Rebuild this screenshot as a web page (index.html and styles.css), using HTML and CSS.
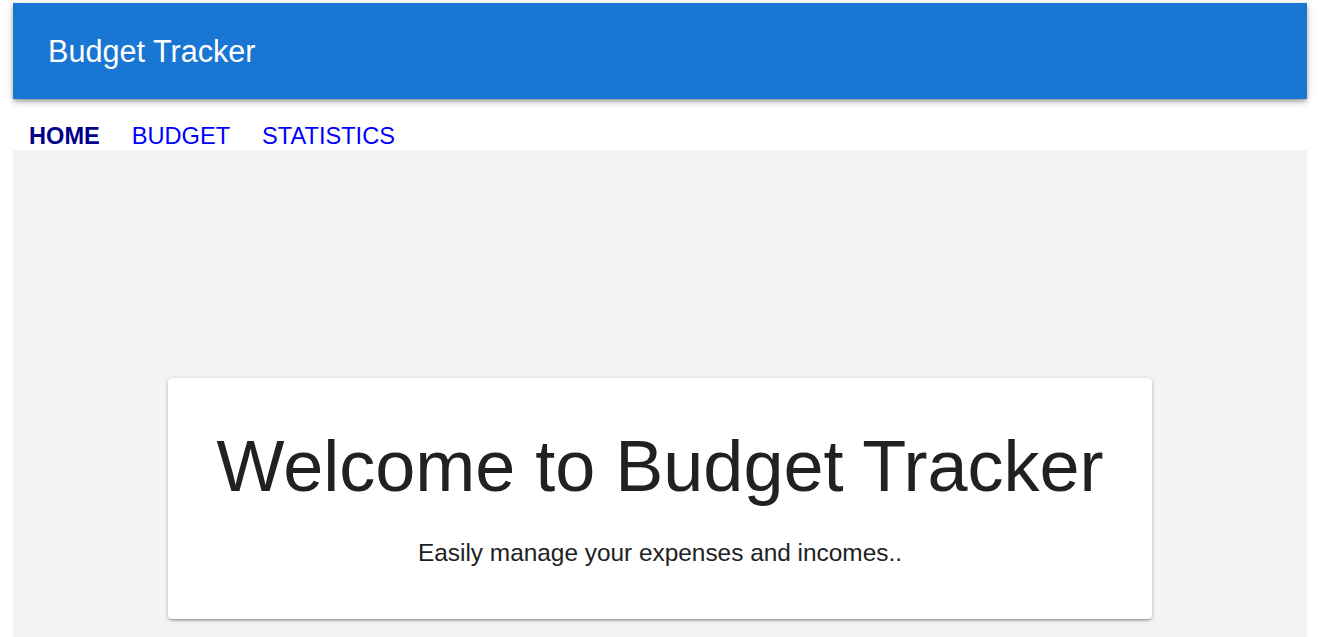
FILE: index.html
```html
<!DOCTYPE html>
<html lang="en">
<head>
<meta charset="utf-8">
<title>Budget Tracker</title>
<link rel="stylesheet" href="styles.css">
</head>
<body>
<div class="page">
  <header class="app-bar">
    <span class="brand">Budget Tracker</span>
  </header>
  <nav class="tabs">
    <a class="tab active" href="#">HOME</a>
    <a class="tab" href="#">BUDGET</a>
    <a class="tab" href="#">STATISTICS</a>
  </nav>
  <main class="content">
    <section class="card">
      <h1 class="title">Welcome to Budget Tracker</h1>
      <p class="subtitle">Easily manage your expenses and incomes..</p>
    </section>
  </main>
</div>
</body>
</html>
```
FILE: styles.css
```css
html, body {
  margin: 0;
  padding: 0;
  background: #ffffff;
  font-family: "Liberation Sans", Arial, sans-serif;
}
.page {
  margin: 3px 14px 0 13px;
}
.app-bar {
  height: 96px;
  background: #1976d2;
  display: flex;
  align-items: center;
  padding-left: 35px;
  box-shadow: 0 4px 5px 0 rgba(0,0,0,0.14), 0 1px 10px 0 rgba(0,0,0,0.12), 0 2px 4px -1px rgba(0,0,0,0.3);
  position: relative;
  z-index: 1;
}
.brand {
  color: #ffffff;
  font-size: 30.6px;
}
.tabs {
  height: 51px;
  display: flex;
  align-items: flex-end;
  padding-left: 16px;
  gap: 32px;
}
.tab {
  font-size: 23.6px;
  color: #0000ff;
  text-decoration: none;
}
.tab.active {
  color: #00008b;
  font-weight: bold;
}
.content {
  background: #f4f4f4;
  padding-top: 228px;
  padding-bottom: 200px;
  display: flex;
  justify-content: center;
}
.card {
  width: 984px;
  height: 241px;
  box-sizing: border-box;
  background: #ffffff;
  border-radius: 4px;
  box-shadow: 0 2px 2px 0 rgba(0,0,0,0.14), 0 3px 1px -2px rgba(0,0,0,0.12), 0 1px 5px 0 rgba(0,0,0,0.2);
  text-align: center;
  padding-top: 52px;
  color: #212121;
}
.title {
  margin: 0;
  font-size: 72px;
  font-weight: normal;
  line-height: 1;
}
.subtitle {
  margin: 37px 0 0;
  font-size: 24.4px;
}
```
